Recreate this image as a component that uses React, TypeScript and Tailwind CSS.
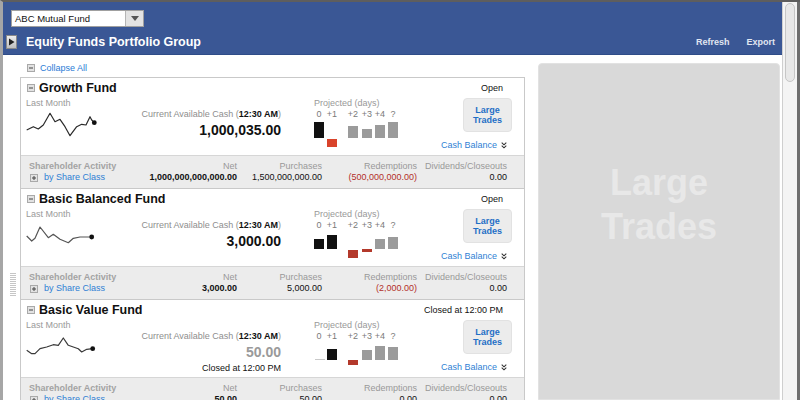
import React from "react";

type Bar = { x: number; y: number; h: number; c: string };

type Fund = {
  name: string;
  status: string;
  cash: string;
  closed?: boolean;
  line: string;
  lineColor: string;
  dot: [number, number];
  bars: Bar[];
  net: string;
  purchases: string;
  redemptions: string;
  dividends: string;
};

const BLACK = "#111";
const GRAY = "#9b9b9b";
const RED = "#b3392b";
const BRIGHT_RED = "#d9432b";
const COLS = [1, 14, 35, 49, 62, 75];

const funds: Fund[] = [
  {
    name: "Growth Fund",
    status: "Open",
    cash: "1,000,035.00",
    line: "2.7,19 9.3,15.7 14.3,18 19.3,14 26,2.3 31,10.7 36,8.3 41,15.7 46,24.7 52.7,15.7 57.7,13.3 62,14 66,5.7 67.7,9 70.3,11.7",
    lineColor: "#2a2a2a",
    dot: [70.3, 11.7],
    bars: [
      { x: COLS[0], y: 2, h: 16, c: BLACK },
      { x: COLS[1], y: 19, h: 8, c: BRIGHT_RED },
      { x: COLS[2], y: 6, h: 12, c: GRAY },
      { x: COLS[3], y: 9, h: 9, c: GRAY },
      { x: COLS[4], y: 5, h: 13, c: GRAY },
      { x: COLS[5], y: 2, h: 16, c: GRAY },
    ],
    net: "1,000,000,000,000.00",
    purchases: "1,500,000,000.00",
    redemptions: "(500,000,000.00)",
    dividends: "0.00",
  },
  {
    name: "Basic Balanced Fund",
    status: "Open",
    cash: "3,000.00",
    line: "2.7,14 7.7,19 11,16.3 16,5 24.3,15.7 29.3,12.3 36,17.3 44.3,20.7 49.3,16.3 56,15 67.7,15",
    lineColor: "#555",
    dot: [67.7, 15],
    bars: [
      { x: COLS[0], y: 8, h: 10, c: BLACK },
      { x: COLS[1], y: 4, h: 14, c: BLACK },
      { x: COLS[2], y: 19, h: 8, c: RED },
      { x: COLS[3], y: 18, h: 3, c: RED },
      { x: COLS[4], y: 8, h: 10, c: GRAY },
      { x: COLS[5], y: 6, h: 12, c: GRAY },
    ],
    net: "3,000.00",
    purchases: "5,000.00",
    redemptions: "(2,000.00)",
    dividends: "0.00",
  },
  {
    name: "Basic Value Fund",
    status: "Closed at 12:00 PM",
    cash: "50.00",
    closed: true,
    line: "2.7,17.3 7.7,20.7 11,20.7 16,15.7 22.7,14 29.3,11.7 34.3,12.3 39.3,5 44.3,12.3 49.3,14 54.3,15.7 57.7,19 62.7,16.3 68.7,15.7",
    lineColor: "#3a3a3a",
    dot: [68.7, 15.7],
    bars: [
      { x: COLS[0] + 1, y: 17, h: 1, c: "#c9c9c9" },
      { x: COLS[1], y: 7, h: 11, c: BLACK },
      { x: COLS[2], y: 18, h: 5, c: RED },
      { x: COLS[3], y: 8, h: 10, c: GRAY },
      { x: COLS[4], y: 4, h: 14, c: GRAY },
      { x: COLS[5], y: 5, h: 13, c: GRAY },
    ],
    net: "50.00",
    purchases: "50.00",
    redemptions: "0.00",
    dividends: "0.00",
  },
];

const days = [
  { t: "0", m: "ml-0" },
  { t: "+1", m: "ml-[1px]" },
  { t: "+2", m: "ml-[9px]" },
  { t: "+3", m: "ml-[2px]" },
  { t: "+4", m: "ml-[1px]" },
  { t: "?", m: "ml-[1px]" },
];

const ToggleBox = ({ plus }: { plus?: boolean }) => (
  <svg width="8" height="8" viewBox="0 0 8 8" className="shrink-0">
    <rect x="0.5" y="0.5" width="7" height="7" fill="#e2e2e2" stroke="#a9a9a9" />
    <line x1="2" y1="4" x2="6" y2="4" stroke="#444" />
    {plus && <line x1="4" y1="2" x2="4" y2="6" stroke="#444" />}
  </svg>
);

const FundCard = ({ fund, first }: { fund: Fund; first: boolean }) => (
  <div className={first ? "" : "border-t border-[#c9c9c9]"}>
    <div className="h-[77px] bg-white pl-[5px] pr-[17px] pt-[3px]">
      <div className="flex h-[14px] items-center justify-between">
        <div className="flex items-center gap-[4px] pl-[1px]">
          <ToggleBox />
          <span className="text-[12.5px] font-bold leading-[14px] text-[#111]">{fund.name}</span>
        </div>
        <span className="mr-[4px] text-[9px] leading-[10px] text-[#111]">{fund.status}</span>
      </div>

      <div className="mt-[3px] flex">
        <div className="w-[100px]">
          <div className="text-[9px] leading-[11px] text-[#9a9a9a]">Last Month</div>
          <svg width="74" height="28" viewBox="2 0 74 28" className="mt-[2px]">
            <polyline points={fund.line} fill="none" stroke={fund.lineColor} strokeWidth="1.2" strokeLinejoin="round" />
            <circle cx={fund.dot[0]} cy={fund.dot[1]} r="2.4" fill="#111" />
          </svg>
        </div>

        <div className="w-[155px] text-right">
          <div className="mt-[11px] whitespace-nowrap text-[9px] leading-[10px] text-[#8e8e8e]">
            Current Available Cash (<span className="font-bold text-[#111]">12:30 AM</span>)
          </div>
          <div
            className={`mt-[4px] text-[14px] font-bold leading-[15px] ${fund.closed ? "text-[#9a9a9a]" : "text-[#111]"}`}
          >
            {fund.cash}
          </div>
          {fund.closed && (
            <div className="mt-[3px] text-[9px] leading-[10px] text-[#111]">Closed at 12:00 PM</div>
          )}
        </div>

        <div className="ml-[32px] w-[86px]">
          <div className="ml-[1px] whitespace-nowrap text-[9px] leading-[11px] text-[#999]">Projected (days)</div>
          <div className="flex text-[9px] leading-[11px] text-[#7a7a7a]">
            {days.map((d) => (
              <span key={d.t} className={`w-[12px] text-center ${d.m}`}>
                {d.t}
              </span>
            ))}
          </div>
          <svg width="86" height="30" viewBox="0 0 86 30">
            {fund.bars.map((b, i) => (
              <rect key={i} x={b.x} y={b.y} width="10" height={b.h} fill={b.c} />
            ))}
          </svg>
        </div>

        <div className="flex flex-1 flex-col items-end">
          <button className="-mr-[5px] flex h-[34px] w-[49px] flex-col items-center justify-center rounded-[4px] border border-[#e2e2e2] bg-[#ececec] text-[9px] font-bold leading-[10px] text-[#1f6fc6]">
            <span>Large</span>
            <span>Trades</span>
          </button>
          <div className="mt-[8px] flex items-center gap-[4px] text-[9px] leading-[10px] text-[#2f7fd4]">
            <span>Cash Balance</span>
            <svg width="6" height="7" viewBox="0 0 6 7">
              <polyline points="0.7,0.7 3,2.8 5.3,0.7" fill="none" stroke="#333" strokeWidth="1.1" />
              <polyline points="0.7,3.7 3,5.8 5.3,3.7" fill="none" stroke="#333" strokeWidth="1.1" />
            </svg>
          </div>
        </div>
      </div>
    </div>

    <div className="flex h-[33px] border-t border-[#d6d6d6] bg-[#ececec] pl-[8px] pt-[5px] text-[9px] leading-[11px]">
      <div className="w-[111px]">
        <div className="font-bold text-[#a3a3a3]">Shareholder Activity</div>
        <div className="flex items-center gap-[6px] pl-[1px]">
          <ToggleBox plus />
          <span className="text-[#2f7fd4]">by Share Class</span>
        </div>
      </div>
      <div className="w-[97px] text-right">
        <div className="text-[#999]">Net</div>
        <div className="font-bold text-[#111]">{fund.net}</div>
      </div>
      <div className="w-[85px] text-right">
        <div className="text-[#999]">Purchases</div>
        <div className="text-[#111]">{fund.purchases}</div>
      </div>
      <div className="w-[95px] text-right">
        <div className="text-[#999]">Redemptions</div>
        <div className={fund.redemptions.startsWith("(") ? "text-[#b3302a]" : "text-[#111]"}>{fund.redemptions}</div>
      </div>
      <div className="w-[90px] text-right">
        <div className="whitespace-nowrap text-[#999]">Dividends/Closeouts</div>
        <div className="text-[#111]">{fund.dividends}</div>
      </div>
    </div>
  </div>
);

export default function App() {
  return (
    <div className="flex h-[400px] w-[800px] overflow-hidden border-l-[3px] border-t-2 border-l-[#a6a6a6] border-t-[#5e5e5e] bg-white font-['Liberation_Sans',Arial,sans-serif]">
      <div className="flex min-w-0 flex-1 flex-col">
        <header className="h-[53px] shrink-0 border-b border-[#2f4c88] bg-[#3a5795] pl-[3px] pt-[8px]">
          <div className="ml-[5px] flex h-[17px] w-[133px] border border-[#a0a0a0] bg-white">
            <span className="flex-1 pl-[3px] text-[9.5px] leading-[15px] text-[#111]">ABC Mutual Fund</span>
            <span className="flex w-[18px] items-center justify-center border-l border-[#b5b5b5] bg-[#e3e3e3]">
              <svg width="8" height="5" viewBox="0 0 8 5">
                <polygon points="0,0 8,0 4,5" fill="#555" />
              </svg>
            </span>
          </div>
          <div className="mt-[8px] flex h-[14px] items-center justify-between pr-[7px]">
            <div className="flex items-center">
              <svg width="11" height="14" viewBox="0 0 11 14">
                <defs>
                  <linearGradient id="pb" x1="0" y1="0" x2="0" y2="1">
                    <stop offset="0" stopColor="#f0f0f0" />
                    <stop offset="1" stopColor="#bdbdbd" />
                  </linearGradient>
                </defs>
                <rect x="0.5" y="0.5" width="10" height="13" fill="url(#pb)" stroke="#8a8a8a" />
                <polygon points="3,3.5 8.5,7 3,10.5" fill="#222" />
              </svg>
              <span className="ml-[9px] text-[12.5px] font-bold leading-[14px] text-white">
                Equity Funds Portfolio Group
              </span>
            </div>
            <div className="flex gap-[17px] text-[9px] font-bold leading-[10px] text-[#e1e6f1]">
              <span>Refresh</span>
              <span>Export</span>
            </div>
          </div>
        </header>

        <div className="flex min-h-0 flex-1 pr-[2px]">
          <div className="w-[522px] shrink-0 pt-[8px]">
            <div className="flex h-[10px] items-center gap-[5px] pl-[24px]">
              <ToggleBox />
              <span className="text-[9px] leading-[10px] text-[#2b7bd6]">Collapse All</span>
            </div>
            <div className="mt-[4px] flex">
              <div className="w-[17px] shrink-0 pt-[196px]">
                <div className="ml-[7px] flex w-[6px] flex-col gap-px">
                  {Array.from({ length: 12 }).map((_, i) => (
                    <div key={i} className="h-px bg-[#c6c6c6]" />
                  ))}
                </div>
              </div>
              <div className="w-[505px] border border-[#c9c9c9]">
                {funds.map((f, i) => (
                  <FundCard key={f.name} fund={f} first={i === 0} />
                ))}
              </div>
            </div>
          </div>

          <div className="ml-[13px] mt-[8px] flex-1 rounded-t-[4px] border border-[#e2e2e2] bg-[#d9d9d9] pt-[97px] text-center text-[36px] font-bold leading-[44px] text-[#e8e8e8]">
            <div>Large</div>
            <div>Trades</div>
          </div>
        </div>
      </div>

      <div className="flex h-full w-[18px] shrink-0 border-l border-r-[3px] border-l-[#cfcfcf] border-r-[#6e6e6e] bg-[#f4f4f4]">
        <div className="mx-[2px] mt-[1px] h-[79px] flex-1 rounded-full border border-[#c6c6c6] bg-[#e8e8e8]" />
      </div>
    </div>
  );
}
